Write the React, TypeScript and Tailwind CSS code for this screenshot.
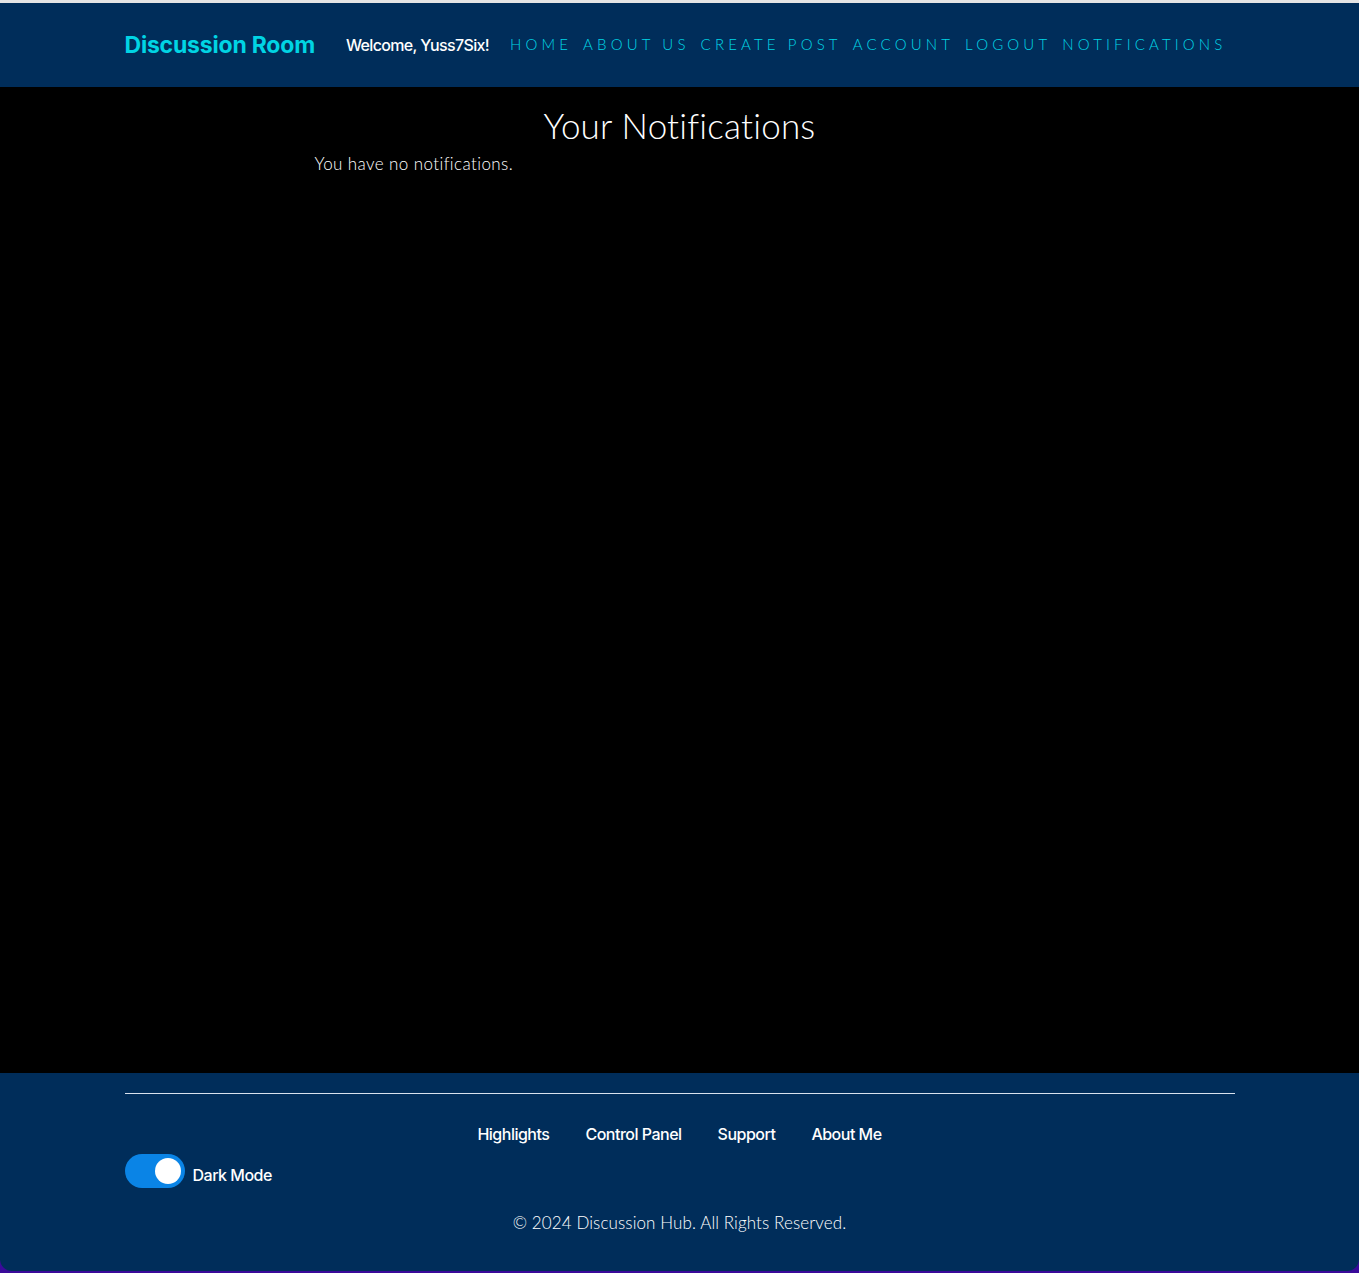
import { useState } from "react";

const navLinks = ["Home", "About Us", "Create Post", "Account", "Logout", "Notifications"];
const footerLinks = ["Highlights", "Control Panel", "Support", "About Me"];

function Header() {
  return (
    <header className="bg-[#002d5a] h-[84px]">
      <div className="w-[1110px] mx-auto h-full flex items-center">
        <a className="font-['Inter',sans-serif] font-bold text-[23px] text-[#00d4e4] tracking-[-0.2px]">
          Discussion Room
        </a>
        <span className="ml-[31px] font-['Inter',sans-serif] font-medium text-[16px] text-white tracking-[-0.65px]">
          Welcome, Yuss7Six!
        </span>
        {/* nav links */}
        <ul className="ml-auto flex items-center gap-[11px] mt-[-2px] pr-[8px]">
          {navLinks.map((link) => (
            <li key={link}>
              <a className="font-['Lato',sans-serif] font-light uppercase text-[15px] tracking-[4.15px] text-[#00d6e6]">
                {link}
              </a>
            </li>
          ))}
        </ul>
      </div>
    </header>
  );
}

function Toggle() {
  const [on, setOn] = useState(true);
  return (
    <button
      onClick={() => setOn(!on)}
      className={`w-[60px] h-[34px] rounded-full flex items-center px-[4px] ${
        on ? "bg-[#0a84e6] justify-end" : "bg-gray-400 justify-start"
      }`}
    >
      <span className="w-[26px] h-[26px] rounded-full bg-white block" />
    </button>
  );
}

function Footer() {
  return (
    <footer className="bg-[#002d5a] h-[198px] rounded-b-[12px] overflow-hidden">
      <div className="w-[1110px] mx-auto pt-[20px]">
        <hr className="border-0 border-t border-[#d8e2ee]" />
        <ul className="flex justify-center gap-[36px] mt-[28px] font-['Inter',sans-serif] font-medium text-[16px] text-white tracking-[-0.5px]">
          {footerLinks.map((l) => (
            <li key={l}>
              <a>{l}</a>
            </li>
          ))}
        </ul>
        <div className="flex items-center mt-[8px] gap-[8px]">
          <Toggle />
          <span className="font-['Inter',sans-serif] font-medium text-[16px] text-white tracking-[-0.5px] mt-[7px]">
            Dark Mode
          </span>
        </div>
        <p className="text-center mt-[22px] font-['Lato',sans-serif] font-light text-[17px] tracking-[0.1px] text-white">
          © 2024 Discussion Hub. All Rights Reserved.
        </p>
      </div>
    </footer>
  );
}

export default function App() {
  return (
    <div className="min-h-[1273px] bg-[#3a0a9a] flex flex-col border-t-[3px] border-[#e4e4e4]">
      <Header />

      {/* Main content */}
      <main className="bg-black h-[986px]">
        <div className="w-[730px] mx-auto pt-[15px]">
          <h1 className="text-center font-['Lato',sans-serif] font-light text-[35px] tracking-[0.2px] text-white leading-[46px]">
            Your Notifications
          </h1>
          <p className="mt-[3px] font-['Lato',sans-serif] font-light text-[17px] tracking-[0.4px] text-white">
            You have no notifications.
          </p>
        </div>
      </main>

      <Footer />
    </div>
  );
}
